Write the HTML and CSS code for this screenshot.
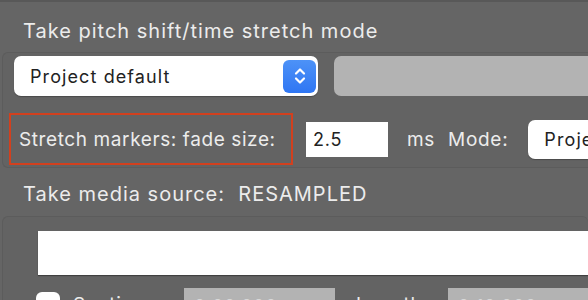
FILE: index.html
```html
<!DOCTYPE html>
<html lang="en">
<head>
  <meta charset="UTF-8">
  <title>Take properties</title>
  <link rel="stylesheet" href="styles.css">
</head>
<body>

<div class="topband"></div>

<h2 class="title">Take pitch shift/time stretch mode</h2>

<div class="group group-pitch">
  <div class="row row-mode">
    <div class="popup popup-mode">
      <span>Project default</span>
      <span class="stepper">
        <svg width="14" height="22" viewBox="0 0 14 22">
          <path d="M3 8.5 L7 4.5 L11 8.5" fill="none" stroke="#fff" stroke-width="2.2" stroke-linecap="round" stroke-linejoin="round"/>
          <path d="M3 13.5 L7 17.5 L11 13.5" fill="none" stroke="#fff" stroke-width="2.2" stroke-linecap="round" stroke-linejoin="round"/>
        </svg>
      </span>
    </div>
    <div class="field-disabled"></div>
  </div>

  <div class="row row-fade">
    <div class="label-marked">Stretch markers: fade size:</div>
    <input class="num" type="text" value="2.5">
    <span class="unit">ms</span>
    <span class="label-mode">Mode:</span>
    <div class="popup popup-fade"><span>Project default</span></div>
  </div>
</div>

<h2 class="title title-source">Take media source:&nbsp; RESAMPLED</h2>

<div class="group group-source">
  <div class="filename"></div>
  <div class="row row-section">
    <span class="check"></span>
    <span class="label-section">Section:</span>
    <div class="field-disabled small"><span>0:00.000</span></div>
    <span class="label-length">Length:</span>
    <div class="field-disabled small"><span>0:10.000</span></div>
  </div>
</div>

</body>
</html>
```

FILE: styles.css
```css
html, body {
  margin: 0;
  height: 300px;
  overflow: hidden;
}
body {
  background-color: #656565;
  font-family: Inter, "Noto Sans", sans-serif;
  color: #ececec;
  width: 588px;
}
.topband {
  height: 2px;
  background-color: #585858;
}
.title {
  margin: 0;
  font-size: 20px;
  font-weight: 400;
  letter-spacing: 1px;
  line-height: 24px;
  padding: 17px 0 0 23px;
  height: 33px;
  white-space: nowrap;
}
.group {
  margin-left: 2px;
  background-color: #636363;
  border: 1px solid #5c5c5c;
  border-radius: 6px;
}
.group-pitch {
  height: 114px;
  border-right: none;
  border-top-right-radius: 0;
  border-bottom-right-radius: 0;
}
.row {
  display: flex;
  align-items: center;
}
.row > * {
  flex-shrink: 0;
}
.row-mode {
  padding: 3px 0 0 11px;
  gap: 16px;
}
.popup {
  background-color: #fff;
  border-radius: 7px;
  color: #222;
  font-size: 18px;
  letter-spacing: 1.1px;
  display: flex;
  align-items: center;
  white-space: nowrap;
  overflow: hidden;
  box-shadow: 0 1px 1px rgba(0,0,0,0.25);
}
.popup-mode {
  width: 304px;
  height: 40px;
  justify-content: space-between;
  padding-left: 16px;
  box-sizing: border-box;
}
.stepper {
  width: 33px;
  height: 33px;
  margin-right: 2px;
  border-radius: 6px;
  background: linear-gradient(#4d92f7, #2f76f3);
  display: flex;
  align-items: center;
  justify-content: center;
}
.field-disabled {
  flex: 1;
  height: 40px;
  background-color: #b3b3b3;
  border-top-left-radius: 7px;
  border-bottom-left-radius: 7px;
}
.row > .field-disabled {
  flex-shrink: 1;
}
.row-fade {
  padding: 0 0 0 6px;
  margin-top: 17px;
  height: 52px;
}
.label-marked {
  box-sizing: border-box;
  height: 52px;
  width: 284px;
  border: 2px solid #d2401e;
  padding: 0 0 0 8px;
  font-size: 19px;
  letter-spacing: 0.6px;
  display: flex;
  align-items: center;
  white-space: nowrap;
}
.num {
  margin-left: 13px;
  width: 82px;
  height: 35px;
  box-sizing: border-box;
  border: none;
  outline: none;
  padding: 0 0 0 7px;
  font-family: Inter, "Noto Sans", sans-serif;
  font-size: 18px;
  letter-spacing: 0.8px;
  color: #222;
  background-color: #fff;
}
.unit {
  font-size: 19px;
  letter-spacing: 0.7px;
  margin-left: 19px;
}
.label-mode {
  font-size: 19px;
  letter-spacing: 0.7px;
  margin-left: 13px;
}
.popup-fade {
  margin-left: 20px;
  height: 39px;
  flex: 1 1 0;
  min-width: 0;
  padding-left: 16px;
  border-top-right-radius: 0;
  border-bottom-right-radius: 0;
}
.title-source {
  padding-top: 14px;
  height: 34px;
}
.group-source {
  height: 120px;
  border-right: none;
  padding-top: 14px;
}
.filename {
  margin-left: 35px;
  height: 44px;
  background-color: #fff;
  box-shadow: 0 1px 1px rgba(0,0,0,0.35);
}
.row-section {
  padding: 13px 0 0 33px;
  font-size: 19px;
  letter-spacing: 0.7px;
  align-items: flex-start;
}
.check {
  width: 24px;
  height: 24px;
  margin-top: 4px;
  border-radius: 6px;
  background-color: #fff;
}
.label-section {
  margin-left: 13px;
  width: 111px;
  padding-top: 5px;
}
.field-disabled.small {
  flex: none;
  width: 151px;
  height: 36px;
  border-radius: 0;
  color: #d8d8d8;
  font-size: 18px;
  padding-left: 10px;
  box-sizing: border-box;
  display: flex;
  align-items: center;
}
.field-disabled.small:last-child {
  flex: 1 1 0;
}
.label-length {
  margin: 0 28px 0 21px;
  width: 64px;
  padding-top: 5px;
}
```
